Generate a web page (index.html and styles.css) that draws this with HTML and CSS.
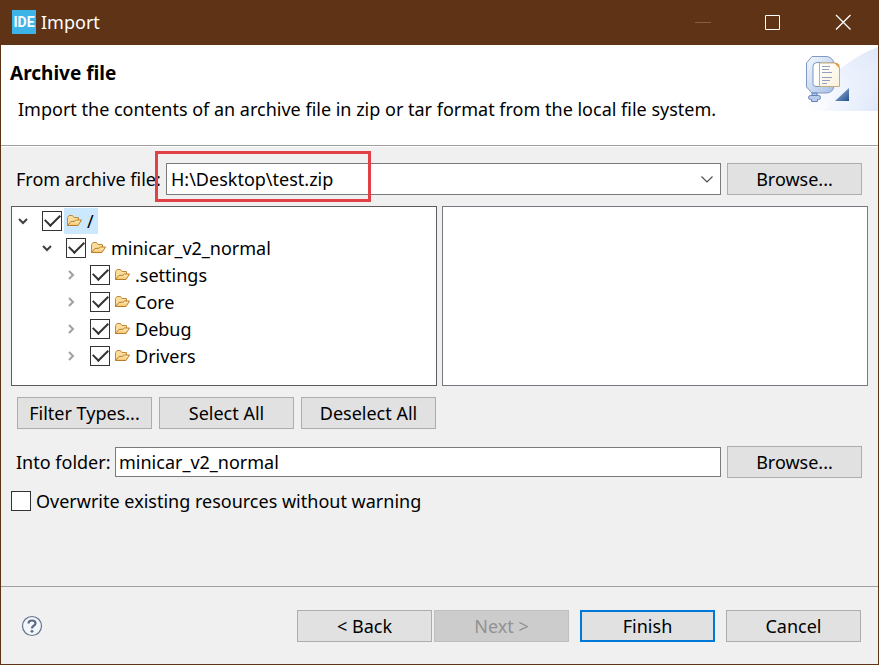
FILE: index.html
```html
<!DOCTYPE html>
<html lang="en">
<head>
<meta charset="utf-8">
<meta name="viewport" content="width=device-width, initial-scale=1">
<title>Import</title>
<link rel="stylesheet" href="styles.css">
</head>
<body>
<svg class="defs" aria-hidden="true">
  <defs>
    <linearGradient id="folder-front" x1="0" y1="0" x2="0" y2="1"><stop offset="0" stop-color="#fff0bd"/><stop offset="1" stop-color="#f5c46c"/></linearGradient>
    <symbol id="folder" viewBox="0 0 16 13">
      <path d="M1.500 11.500V3.500L3 1.500h3.500L8 3.500h4.500v3" fill="#fbdc9b" stroke="#c08a3e"/>
      <path d="M1.500 11.500L5 7.500l4-.3 1.500-1.200h5L12 11.500z" fill="url(#folder-front)" stroke="#b97d2c"/>
    </symbol>
    <symbol id="open" viewBox="0 0 12 12"><path d="M2 4l4 4 4-4" fill="none" stroke="#404040" stroke-width="2"/></symbol>
    <symbol id="closed" viewBox="0 0 12 12"><path d="M4 2l4 4-4 4" fill="none" stroke="#a0a0a0" stroke-width="2"/></symbol>
  </defs>
</svg>
<div class="window">
  <header class="titlebar">
    <svg class="app-icon" viewBox="0 0 24 24" aria-hidden="true"><rect width="24" height="24" fill="#3cb4e7"/><text class="app-mark" x="12" y="17" text-anchor="middle">IDE</text></svg>
    <span class="caption">Import</span>
    <button class="sys" type="button" aria-label="Minimize"><svg viewBox="0 0 16 16"><path d="M0 8.500h16" stroke="#865f47"/></svg></button>
    <button class="sys" type="button" aria-label="Maximize"><svg viewBox="0 0 16 16"><path d="M.500 1.500h14v14h-14z" stroke="#fff"/></svg></button>
    <button class="sys" type="button" aria-label="Close"><svg viewBox="0 0 16 16"><path d="M1 1l14.500 14.500M15.500 1L1 15.500" stroke="#fff" stroke-width="1.300"/></svg></button>
  </header>
  <section class="banner">
    <div class="banner-text">
      <h1>Archive file</h1>
      <p>Import the contents of an archive file in zip or tar format from the local file system.</p>
    </div>
    <svg class="banner-art" viewBox="0 0 75 66" aria-hidden="true">
      <defs>
        <linearGradient id="sky" x1="0" y1="1" x2="1" y2="0"><stop offset="0" stop-color="#fff"/><stop offset=".5" stop-color="#eef3fd"/><stop offset="1" stop-color="#dfe8f9"/></linearGradient>
        <linearGradient id="ray" x1="0" y1="0" x2="1" y2="1"><stop offset="0" stop-color="#fff" stop-opacity="0"/><stop offset="1" stop-color="#d0ddf7"/></linearGradient>
        <linearGradient id="clamp" x1="0" y1="0" x2="1" y2="1"><stop offset="0" stop-color="#f5f9ff"/><stop offset="1" stop-color="#a6bfe6"/></linearGradient>
        <linearGradient id="corner" x1="0" y1="0" x2="1" y2="1"><stop offset="0" stop-color="#a9c2e2"/><stop offset="1" stop-color="#204f91"/></linearGradient>
        <linearGradient id="paper" x1="0" y1="0" x2="1" y2="1"><stop offset="0" stop-color="#fff"/><stop offset="1" stop-color="#fbf2dc"/></linearGradient>
      </defs>
      <path d="M0 66Q32 18 75 2V66z" fill="url(#sky)"/>
      <path d="M22 66Q38 34 75 20V66z" fill="url(#ray)" opacity=".55"/>
      <path d="M9 11.500h14Q29 11.500 31 18H17V41H31Q30 48 23 48H9L3.500 42V18z" fill="url(#clamp)" stroke="#7f98c4"/>
      <path d="M9 48h5v3H9z" fill="#a9c0e4" stroke="#6484bb"/>
      <path d="M7.500 50.500h8q2 0 2 2t-2 2h-1v2h-6v-2h-1q-2 0-2-2t2-2z" fill="#b8cdec" stroke="#6484bb"/>
      <path d="M17 17.500h-3q-4 0-4 4v17q0 3 3 3h4z" fill="#fff" stroke="#7e96c0"/>
      <path d="M16.500 18H32L36.500 22.500V41.500H16.500z" fill="url(#paper)"/>
      <path d="M16.500 18V41.500H36.500V22.500L32 18z" fill="none" stroke="#c3ad7b"/>
      <path d="M31 17.500L36.500 23.500V20q-2-3-5.500-2.500z" fill="#dd9a45"/>
      <path d="M19 21.500h8M19 24.500h7M19 27.500h10M19 32.500h10M19 35.500h8M19 38.500h5" fill="none" stroke="#93a0bc"/>
      <path d="M46 43V56H32z" fill="url(#corner)"/>
    </svg>
  </section>
  <form class="page">
    <div class="row from-row">
      <label for="archive">From archive file:</label>
      <div class="combo">
        <select id="archive"><option>H:\Desktop\test.zip</option></select>
        <svg class="combo-arrow" viewBox="0 0 12 12" aria-hidden="true"><path d="M.500 3.500L6 9l5.500-5.500" fill="none" stroke="#505050" stroke-width="1.200"/></svg>
        <span class="highlight"></span>
      </div>
      <button class="btn" type="button">Browse...</button>
    </div>
    <div class="panels">
      <ul class="tree">
        <li>
          <div class="node"><button class="twist" type="button" aria-label="Collapse"><svg><use href="#open"/></svg></button><input id="n0" type="checkbox" checked><label class="selected" for="n0"><svg><use href="#folder"/></svg>/</label></div>
          <ul>
            <li>
              <div class="node"><button class="twist" type="button" aria-label="Collapse"><svg><use href="#open"/></svg></button><input id="n1" type="checkbox" checked><label for="n1"><svg><use href="#folder"/></svg>minicar_v2_normal</label></div>
              <ul>
                <li><div class="node"><button class="twist" type="button" aria-label="Expand"><svg><use href="#closed"/></svg></button><input id="n2" type="checkbox" checked><label for="n2"><svg><use href="#folder"/></svg>.settings</label></div></li>
                <li><div class="node"><button class="twist" type="button" aria-label="Expand"><svg><use href="#closed"/></svg></button><input id="n3" type="checkbox" checked><label for="n3"><svg><use href="#folder"/></svg>Core</label></div></li>
                <li><div class="node"><button class="twist" type="button" aria-label="Expand"><svg><use href="#closed"/></svg></button><input id="n4" type="checkbox" checked><label for="n4"><svg><use href="#folder"/></svg>Debug</label></div></li>
                <li><div class="node"><button class="twist" type="button" aria-label="Expand"><svg><use href="#closed"/></svg></button><input id="n5" type="checkbox" checked><label for="n5"><svg><use href="#folder"/></svg>Drivers</label></div></li>
              </ul>
            </li>
          </ul>
        </li>
      </ul>
      <div class="files"></div>
    </div>
    <div class="actions">
      <button class="btn" type="button">Filter Types...</button>
      <button class="btn" type="button">Select All</button>
      <button class="btn" type="button">Deselect All</button>
    </div>
    <div class="row into-row">
      <label for="folder-name">Into folder:</label>
      <input class="field" id="folder-name" type="text" value="minicar_v2_normal">
      <button class="btn" type="button">Browse...</button>
    </div>
    <div class="option"><input id="overwrite" type="checkbox"><label for="overwrite">Overwrite existing resources without warning</label></div>
  </form>
  <footer class="footer">
    <button class="help" type="button" aria-label="Help"><svg viewBox="0 0 22 22"><circle cx="11" cy="11" r="9.500" fill="#f3f6fb" stroke="#69758c" stroke-width="1.200"/><path d="M7.500 8.500Q7.500 5.500 11 5.500t3.500 2.700q0 1.500-1.800 2.600-1.700 1-1.700 2.700" fill="none" stroke="#5b6a88" stroke-width="2.200"/><circle cx="11" cy="16.300" r="1.400" fill="#5b6a88"/></svg></button>
    <div class="pager">
      <button class="btn" type="button">&lt; Back</button>
      <button class="btn" type="button" disabled>Next &gt;</button>
    </div>
    <button class="btn primary" type="button">Finish</button>
    <button class="btn" type="button">Cancel</button>
  </footer>
</div>
</body>
</html>
```
FILE: styles.css
```css
* { box-sizing: border-box; }
body { margin: 0; }
body, button, input, select { font: 18px/26px "Noto Sans", "Open Sans", sans-serif; color: #000; }
h1, p, ul { margin: 0; padding: 0; }
ul { list-style: none; }
button { padding: 0; border: 0; background: none; }
svg { display: block; }
.defs { position: absolute; width: 0; height: 0; }

.window {
  display: flex;
  flex-direction: column;
  min-height: 100vh;
  border: 1px solid #5e3316;
  background: #f0f0f0;
}

.titlebar {
  display: flex;
  align-items: center;
  height: 44px;
  padding: 0 0 2px 11px;
  background: #5e3316;
}
.app-icon { width: 24px; height: 24px; }
.app-mark { font: bold 14px Roboto, sans-serif; fill: #fff; }
.caption { flex: 1; margin-left: 5px; color: #fff; }
.sys { display: grid; place-items: center; width: 70px; height: 42px; }
.sys svg { width: 16px; height: 16px; fill: none; }

.banner {
  display: flex;
  justify-content: space-between;
  height: 101px;
  border-bottom: 1px solid #a0a0a0;
  background: #fff;
}
.banner-text { padding: 15px 0 0 9px; white-space: nowrap; }
h1 { font-size: 19px; line-height: 26px; font-weight: 700; }
p { margin: 10px 0 0 8px; }
.banner-art { flex: none; width: 75px; height: 66px; }

.page {
  flex: 1;
  padding: 16px 10px 0;
  border-top: 1px solid #fff;
}
.row {
  display: grid;
  align-items: center;
  padding: 0 6px 0 5px;
}
.row label { white-space: nowrap; }
.from-row { grid-template-columns: 150px 1fr 141px; }
.into-row { grid-template-columns: 99px 1fr 141px; margin-top: 17px; }
.row .btn { margin-left: 6px; }

.btn {
  width: 135px;
  height: 32px;
  border: 1px solid #adadad;
  background: #e1e1e1;
  line-height: 28px;
}
.btn:disabled { border-color: #bfbfbf; background: #ccc; color: #929292; }
.primary { border: 2px solid #0078d7; line-height: 26px; }

.combo { position: relative; height: 32px; }
.combo select {
  appearance: none;
  width: 100%;
  height: 32px;
  padding: 0 4px;
  border: 1px solid #7a7a7a;
  border-radius: 0;
  background: #fff;
}
.combo-arrow { position: absolute; right: 8px; top: 10px; width: 12px; height: 12px; }
.highlight {
  position: absolute;
  top: -12px;
  left: -11px;
  width: 216px;
  height: 51px;
  border: 3px solid #e14045;
  pointer-events: none;
}
.field {
  width: 100%;
  height: 30px;
  padding: 0 3px;
  border: 1px solid #7a7a7a;
  background: #fff;
}

.panels {
  display: grid;
  grid-template-columns: 1fr 1fr;
  gap: 5px;
  margin-top: 11px;
}
.tree, .files { height: 180px; border: 1px solid #747980; background: #fff; }
.tree { border-color: #5c5c5c; overflow: auto; }
.tree ul { padding-left: 24px; }
.node { display: flex; align-items: center; height: 27px; }
.twist { display: grid; place-items: center; width: 12px; height: 27px; margin: 0 13px 0 5px; }
.twist svg { width: 12px; height: 12px; }
.node label { display: flex; align-items: center; gap: 5px; height: 26px; margin-left: 2px; padding: 0 4px 0 2px; line-height: 24px; }
.node label svg { width: 16px; height: 13px; }
.selected { background: #cce8ff; }

input[type="checkbox"] {
  appearance: none;
  flex: none;
  display: grid;
  place-items: center;
  width: 20px;
  height: 20px;
  margin: 0;
  border: 1px solid #333;
  background: #fff;
}
input[type="checkbox"]:checked::before {
  content: "";
  width: 13px;
  height: 7px;
  border: solid #333;
  border-width: 0 0 2px 2px;
  transform: translateY(-2px) rotate(-45deg);
}

.actions { display: flex; gap: 7px; margin: 11px 0 0 6px; }
.option { display: flex; align-items: center; gap: 5px; margin-top: 10px; }

.footer {
  display: flex;
  align-items: center;
  gap: 11px;
  height: 78px;
  padding: 0 17px 0 20px;
  border-top: 1px solid #a0a0a0;
}
.help { margin-right: auto; }
.help svg { width: 22px; height: 22px; }
.pager { display: flex; gap: 2px; }
```
